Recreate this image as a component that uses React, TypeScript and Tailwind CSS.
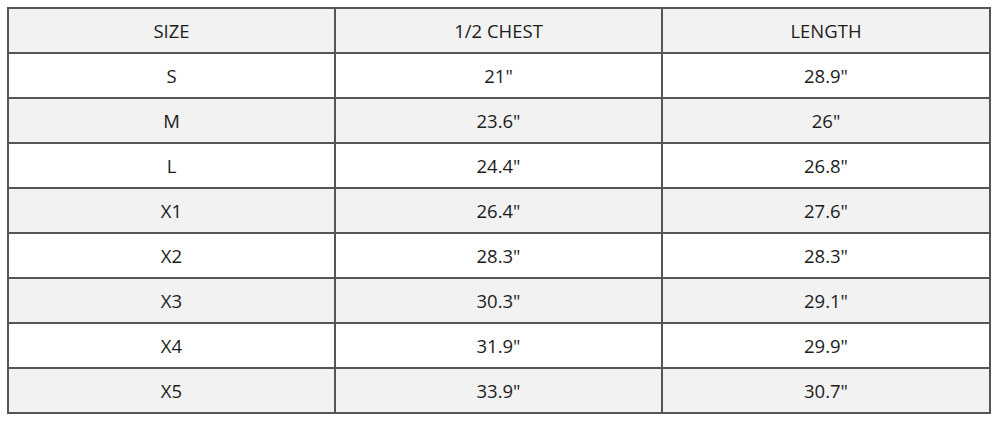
import React from "react";

const rows: [string, string, string][] = [
  ["S", '21"', '28.9"'],
  ["M", '23.6"', '26"'],
  ["L", '24.4"', '26.8"'],
  ["X1", '26.4"', '27.6"'],
  ["X2", '28.3"', '28.3"'],
  ["X3", '30.3"', '29.1"'],
  ["X4", '31.9"', '29.9"'],
  ["X5", '33.9"', '30.7"'],
];

export default function App() {
  return (
    <div className="w-[1000px] h-[424px] bg-white pl-[7px] pt-[7px]" style={{ fontFamily: "'Open Sans', 'Noto Sans', sans-serif" }}>
      <table className="w-[984px] border-collapse table-fixed text-[18.5px] text-[#1c1c1c]">
        <thead>
          <tr className="h-[45px] bg-[#f2f2f2]">
            <th className="border-2 border-[#555] font-normal text-center w-[327px]">SIZE</th>
            <th className="border-2 border-[#555] font-normal text-center w-[327px]">1/2 CHEST</th>
            <th className="border-2 border-[#555] font-normal text-center">LENGTH</th>
          </tr>
        </thead>
        <tbody>
          {rows.map((r, i) => (
            <tr key={r[0]} className={i % 2 === 1 ? "h-[45px] bg-[#f2f2f2]" : "h-[45px] bg-white"}>
              <td className="border-2 border-[#555] text-center">{r[0]}</td>
              <td className="border-2 border-[#555] text-center">{r[1]}</td>
              <td className="border-2 border-[#555] text-center">{r[2]}</td>
            </tr>
          ))}
        </tbody>
      </table>
    </div>
  );
}
